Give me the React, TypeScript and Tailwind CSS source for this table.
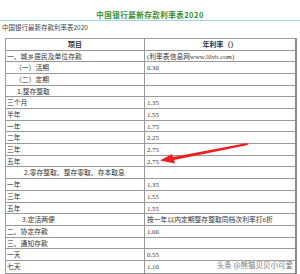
const rows: { label: string; rate: string; indent?: string }[] = [
  { label: "一、城乡居民及单位存款", rate: "(利率表信息网www.lilvb.com)" },
  { label: "（一）活期", rate: "0.30", indent: "pl-[9px]" },
  { label: "（二）定期", rate: "", indent: "pl-[9px]" },
  { label: "1.整存整取", rate: "", indent: "pl-[11px]" },
  { label: "三个月", rate: "1.35" },
  { label: "半年", rate: "1.55" },
  { label: "一年", rate: "1.75" },
  { label: "二年", rate: "2.25" },
  { label: "三年", rate: "2.75" },
  { label: "五年", rate: "2.75" },
  { label: "2.零存整取、整存零取、存本取息", rate: "", indent: "pl-[18px]" },
  { label: "一年", rate: "1.35" },
  { label: "三年", rate: "1.55" },
  { label: "五年", rate: "1.55" },
  { label: "3.定活两便", rate: "按一年以内定期整存整取同档次利率打6折", indent: "pl-[16px]" },
  { label: "二、协定存款", rate: "1.00" },
  { label: "三、通知存款", rate: "" },
  { label: "一天", rate: "0.55" },
  { label: "七天", rate: "1.10" },
];

export default function App() {
  return (
    <div className="relative w-[300px] h-[274px] overflow-hidden bg-white text-[#333] font-['Noto_Sans_CJK_SC',sans-serif]">
      {/* title */}
      <div className="pt-[10px] text-center text-[7.5px] leading-[10px] font-bold text-[#2f8f2f] tracking-[0.5px]">
        中国银行最新存款利率表2020
      </div>
      <div className="h-px bg-[#9fd4ec]" />
      <div className="pl-[2px] pt-[1px] text-[6.5px] leading-[10px] text-[#444]">中国银行最新存款利率表2020</div>

      {/* table */}
      <div className="ml-[5px] mt-[6px] w-[292px] border-l border-t border-[#a0a0a0] border-r-2 border-b-2 border-r-[#8a8a8a] border-b-[#8a8a8a]">
        <div className="flex h-[11.6px] border-b border-[#999] text-[7px] leading-[11px] font-bold">
          <div className="w-[139px] text-center border-r border-[#999]">项目</div>
          <div className="flex-1 text-center">年利率（）</div>
        </div>
        {rows.map((r, i) => (
          <div
            key={i}
            className={
              "flex h-[11.7px] text-[6.8px] leading-[11px] " + (i < rows.length - 1 ? "border-b border-[#999]" : "")
            }
          >
            <div className={"w-[139px] border-r border-[#999] whitespace-nowrap " + (r.indent ?? "pl-px")}>
              {r.label}
            </div>
            <div className="flex-1 pl-[2px] whitespace-nowrap font-['Liberation_Serif','Noto_Sans_CJK_SC',serif]">
              {r.rate}
            </div>
          </div>
        ))}
      </div>

      {/* red arrow */}
      <svg className="absolute left-[155px] top-[142px]" width="95" height="25" viewBox="0 0 95 25">
        <path d="M92 1 L93 3 L19 18 L20 21.5 L5 18.5 L17 12 L18 15 Z" fill="#f01e1e" />
      </svg>

      {/* watermark */}
      <div className="absolute right-[7px] top-[259px] text-[7.5px] leading-[11px] text-[#777] [text-shadow:0_0_2px_#fff,0_0_1px_#fff]">
        头条 @熊猫贝贝小可爱
      </div>
    </div>
  );
}
